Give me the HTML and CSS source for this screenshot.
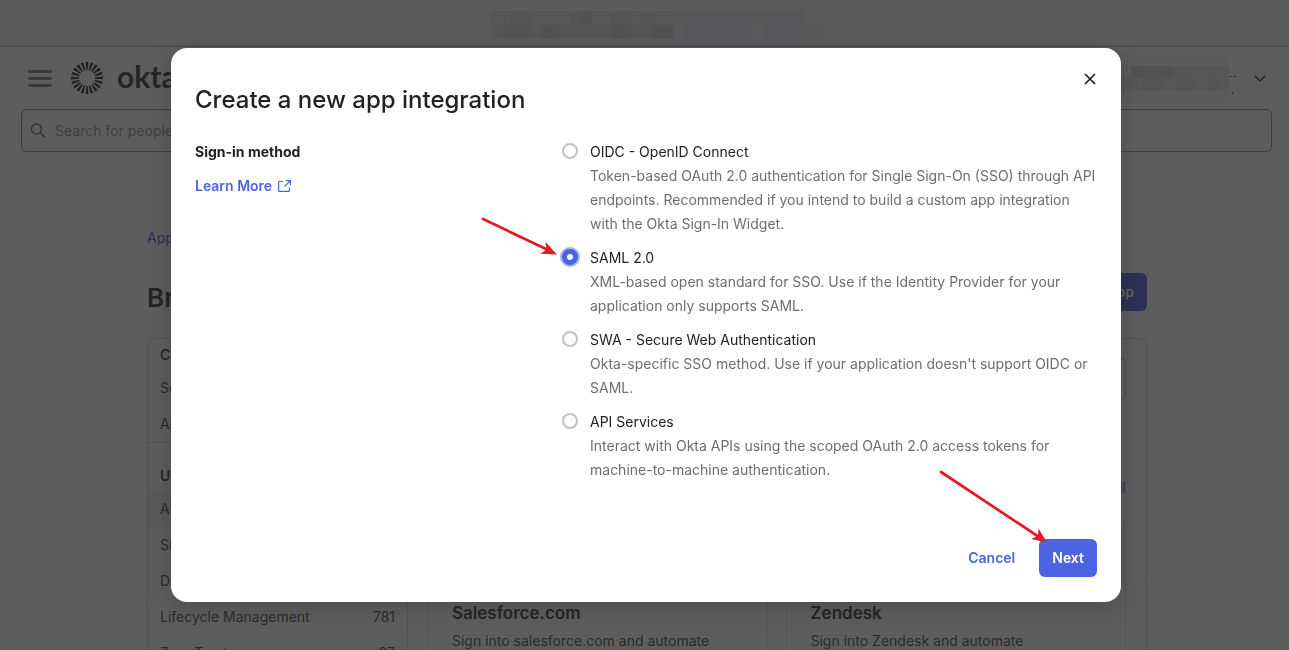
FILE: index.html
```html
<!DOCTYPE html>
<html lang="en">
<head>
<meta charset="utf-8">
<title>Create a new app integration</title>
<link rel="stylesheet" href="styles.css">
</head>
<body>
<div class="page">
  <div class="banner">
    <svg class="banner-mosaic" width="332" height="30" viewBox="0 0 332 30" shape-rendering="crispEdges" aria-hidden="true">
      <path fill="#e4e4e6" d="M0 1h182v27H0z"/>
      <path fill="#dddddf" d="M20 1h20v14H20zM80 1h20v14H80zM120 1h20v27h-20zM151 1h12v14h-12zM10 15h20v13H10zM30 15h10v13H30zM50 15h20v13H50z"/>
      <path fill="#d6d6d8" d="M90 1h11v14H90zM50 15h11v13H50zM120 15h20v13h-20zM161 15h21v13h-21z"/>
      <path fill="#e9e9f3" d="M182 1h130v13H182zM192 14h70v13h-70zM272 14h40v13h-40z"/>
      <path fill="#ececf0" d="M312 14h20v13h-20z"/>
    </svg>
  </div>
  <header class="topbar">
    <button class="menu" aria-label="Menu"><span class="bar"></span><span class="bar"></span><span class="bar"></span></button>
    <svg class="burst" width="34" height="34" viewBox="-17 -17 34 34" aria-hidden="true">
      <circle r="12" fill="none" stroke="#2c2c30" stroke-width="8" pathLength="100" stroke-dasharray="2.800 2.200" transform="rotate(-5)"/>
    </svg>
    <span class="wordmark">okta</span>
    <div class="account">
      <svg width="118" height="48" viewBox="0 0 118 48" shape-rendering="crispEdges" aria-hidden="true">
        <path fill="#f8f8f8" d="M0 0h110v48H0z"/>
        <path fill="#e4e4e4" d="M12 12h98v12H12z"/>
        <path fill="#d8d8d8" d="M12 12h43v12H12z"/>
        <path fill="#e9e9e9" d="M0 24h110v12H0z"/>
        <path fill="#dedede" d="M23 24h22v12H23zM56 24h22v12H56zM88 24h12v12H88z"/>
        <path fill="#555" d="M111 22h2v1h-2zM115 22h2v1h-2zM113 38h1v2h-1z"/>
      </svg>
      <svg width="14" height="14" viewBox="0 0 14 14" fill="none" stroke="#2c2c30" stroke-width="1.500" aria-hidden="true"><path d="M2 5l5 5 5-5"/></svg>
    </div>
  </header>
  <div class="search-row">
    <label class="search">
      <svg width="16" height="16" viewBox="0 0 16 16" fill="none" stroke="#6e6e78" stroke-width="1.400" aria-hidden="true"><circle cx="6.500" cy="6" r="5"/><path d="M10.200 9.700l4.500 4.500"/></svg>
      <input type="text" placeholder="Search for people, apps and groups" aria-label="Search">
    </label>
  </div>
  <main class="content">
    <a class="crumb" href="#">Applications</a>
    <div class="heading-row">
      <h1 class="heading">Browse App Integration Catalog</h1>
      <button class="primary create">Add App</button>
    </div>
    <div class="panel">
      <nav class="sidebar">
        <div class="group">
          <h2 class="group-title light">Collections</h2>
          <a class="item" href="#">Secure Identity</a>
          <a class="item" href="#">App Integrations</a>
        </div>
        <div class="group">
          <h2 class="group-title">Use Case</h2>
          <a class="item active" href="#">All Integrations</a>
          <a class="item" href="#">Single Sign-On</a>
          <a class="item" href="#">Directory and HR Sync</a>
          <a class="item" href="#"><span>Lifecycle Management</span><span>781</span></a>
          <a class="item" href="#"><span>Zero Trust</span><span>87</span></a>
        </div>
      </nav>
      <section class="catalog">
        <input class="catalog-search" type="text" aria-label="Search integrations">
        <a class="see-all" href="#">See all</a>
        <div class="cards">
          <article class="card"><h3 class="card-title">Salesforce.com</h3><p class="card-text">Sign into salesforce.com and automate</p></article>
          <article class="card"><h3 class="card-title">Zendesk</h3><p class="card-text">Sign into Zendesk and automate</p></article>
        </div>
      </section>
    </div>
  </main>
</div>
<div class="overlay">
  <form class="dialog" role="dialog" aria-labelledby="dialog-title">
    <button class="close" type="button" aria-label="Close">
      <svg width="12" height="12" viewBox="0 0 12 12" fill="none" stroke="#1d1d21" stroke-width="1.700" aria-hidden="true"><path d="M1 1l10 10M11 1L1 11"/></svg>
    </button>
    <h2 class="dialog-title" id="dialog-title">Create a new app integration</h2>
    <div class="columns">
      <div class="aside">
        <strong class="aside-title" id="method">Sign-in method</strong>
        <a class="learn" href="#">Learn More
          <svg width="13" height="12" viewBox="0 0 13 12" fill="none" stroke="#4c64e1" stroke-width="1.200" aria-hidden="true"><path d="M5 1.500H1.600a1 1 0 0 0-1 1v7.900a1 1 0 0 0 1 1h8.800a1 1 0 0 0 1-1V7.500M8 .6h4.400v4.400M12.200.8L6.500 6.500"/></svg>
        </a>
      </div>
      <div class="options" role="radiogroup" aria-labelledby="method">
        <label class="option"><input class="radio" type="radio" name="m"><span class="option-body"><span class="option-name">OIDC - OpenID Connect</span><span class="option-text">Token-based OAuth 2.0 authentication for Single Sign-On (SSO) through API endpoints. Recommended if you intend to build a custom app integration with the Okta Sign-In Widget.</span></span></label>
        <label class="option"><input class="radio" type="radio" name="m" checked><span class="option-body"><span class="option-name">SAML 2.0</span><span class="option-text">XML-based open standard for SSO. Use if the Identity Provider for your application only supports SAML.</span></span></label>
        <label class="option"><input class="radio" type="radio" name="m"><span class="option-body"><span class="option-name">SWA - Secure Web Authentication</span><span class="option-text">Okta-specific SSO method. Use if your application doesn't support OIDC or SAML.</span></span></label>
        <label class="option"><input class="radio" type="radio" name="m"><span class="option-body"><span class="option-name">API Services</span><span class="option-text">Interact with Okta APIs using the scoped OAuth 2.0 access tokens for machine-to-machine authentication.</span></span></label>
      </div>
    </div>
    <div class="actions">
      <button class="cancel" type="button">Cancel</button>
      <button class="primary" type="submit">Next</button>
    </div>
    <svg class="arrow arrow-option" width="78" height="42" viewBox="0 0 78 42" aria-hidden="true"><path d="M3 4l63 30" stroke="#e11b22" stroke-width="2.700" stroke-linecap="round"/><path d="M77 39.500l-16.500-.8 6-4.200-1-7.500z" fill="#e11b22"/></svg>
    <svg class="arrow arrow-next" width="110" height="76" viewBox="0 0 110 76" aria-hidden="true"><path d="M3 4l98 65" stroke="#e11b22" stroke-width="2.700" stroke-linecap="round"/><path d="M109 74.500l-16-3.500 7-3 .5-7.500z" fill="#e11b22"/></svg>
  </form>
</div>
</body>
</html>
```

FILE: styles.css
```css
* { box-sizing: border-box; }
html, body { height: 100%; }
body { margin: 0; overflow: hidden; font: 14px/24px Inter, sans-serif; color: #222224; }
h1, h2, h3, p { margin: 0; }
a { text-decoration: none; color: #4c64e1; }
button, input { font: inherit; margin: 0; }
button { border: 0; background: none; padding: 0; }

.page { height: 100%; overflow: hidden; background: #fff; color: #38383c; }
.banner { height: 47px; padding-top: 10px; text-align: center; background: #f2f2f6; border-bottom: 1px solid #a7b1ee; }
.banner-mosaic { margin-left: 24px; }
.topbar { display: flex; align-items: center; height: 62px; padding: 0 22px 0 28px; }
.menu { display: flex; flex-direction: column; gap: 4px; width: 24px; }
.bar { height: 3px; border-radius: 2px; background: #747c86; }
.burst { margin-left: 18px; }
.wordmark { margin-left: 13px; padding-bottom: 5px; font: 700 30px/34px Lato, sans-serif; }
.account { display: flex; align-items: center; gap: 16px; margin-left: auto; }
.search-row { padding: 0 17px 0 21px; }
.search { display: flex; align-items: center; gap: 9px; height: 43px; padding: 0 8px; border: 1px solid #8c8c96; border-radius: 6px; }
.search input { flex: 1; border: 0; outline: 0; background: none; padding: 0; }
.search input::placeholder { color: #96969c; opacity: 1; }

.content { padding: 74px 142px 0 147px; }
.crumb { display: block; }
.heading-row { display: flex; align-items: flex-end; justify-content: space-between; margin-top: 19px; }
.heading { font-size: 26px; line-height: 34px; font-weight: 600; }
.create { margin: 4px 0; }
.primary { height: 38px; padding: 0 13px; border-radius: 6px; background: #4c64e1; color: #fff; font-weight: 600; line-height: 38px; }
.panel { display: flex; margin-top: 23px; border: 1px solid #d7d7dc; border-radius: 8px; }
.sidebar { width: 260px; border-right: 1px solid #d7d7dc; }
.group { padding-bottom: 18px; }
.group:first-child { padding-bottom: 0; margin-bottom: 15px; border-bottom: 1px solid #d7d7dc; }
.group-title { padding: 6px 12px 3px; font-size: 14px; line-height: 24px; font-weight: 600; }
.light { padding: 4px 12px 3px; font-weight: 500; }
.item { display: flex; justify-content: space-between; align-items: center; height: 36px; padding: 0 12px; color: #4c4c52; }
.active { background: #f0f1fb; }
.catalog { flex: 1; padding: 20px 20px 0 19px; }
.catalog-search { display: block; width: 100%; height: 40px; border: 1px solid #b4b4bb; border-radius: 4px; }
.see-all { display: block; margin-top: 77px; text-align: right; }
.cards { display: grid; grid-template-columns: 1fr 1fr; gap: 18px; margin-top: 20px; }
.card { padding: 80px 24px 24px; border: 1px solid #e4e4e8; border-radius: 6px; }
.card-title { font-size: 17px; line-height: 24px; font-weight: 600; }
.card-text { margin-top: 4px; color: #4c4c52; }

.overlay { position: fixed; inset: 0; padding: 48px 168px 0 171px; background: rgba(30, 30, 30, .72); }
.dialog { position: relative; padding: 36px 24px 25px; background: #fff; border-radius: 16px; box-shadow: 0 4px 24px rgba(0, 0, 0, .2); }
.close { position: absolute; top: 19px; right: 19px; width: 24px; height: 24px; display: grid; place-items: center; }
.dialog-title { font-size: 24px; line-height: 32px; font-weight: 450; }
.columns { display: flex; margin-top: 24px; }
.aside { flex: 1; display: flex; flex-direction: column; align-items: flex-start; gap: 10px; }
.aside-title { font-weight: 700; }
.learn { display: flex; align-items: center; gap: 6px; font-weight: 600; }
.options { display: flex; flex-direction: column; gap: 10px; width: 535px; }
.option { display: flex; align-items: flex-start; gap: 12px; }
.radio { appearance: none; flex: none; width: 16px; height: 16px; margin: 3px 0 0; border: 2px solid #c1c1c8; border-radius: 50%; background: #fff; }
.radio:checked { border: 5px solid #4c64e1; box-shadow: 0 0 0 2px #a9b4f0; }
.option-name, .option-text { display: block; }
.option-text { color: #6e6e72; }
.actions { display: flex; justify-content: flex-end; gap: 24px; margin-top: 57px; }
.cancel { color: #4c64e1; font-weight: 600; }
.arrow { position: absolute; fill: none; }
.arrow-option { left: 309px; top: 167px; }
.arrow-next { right: 73px; bottom: 58px; }
```
